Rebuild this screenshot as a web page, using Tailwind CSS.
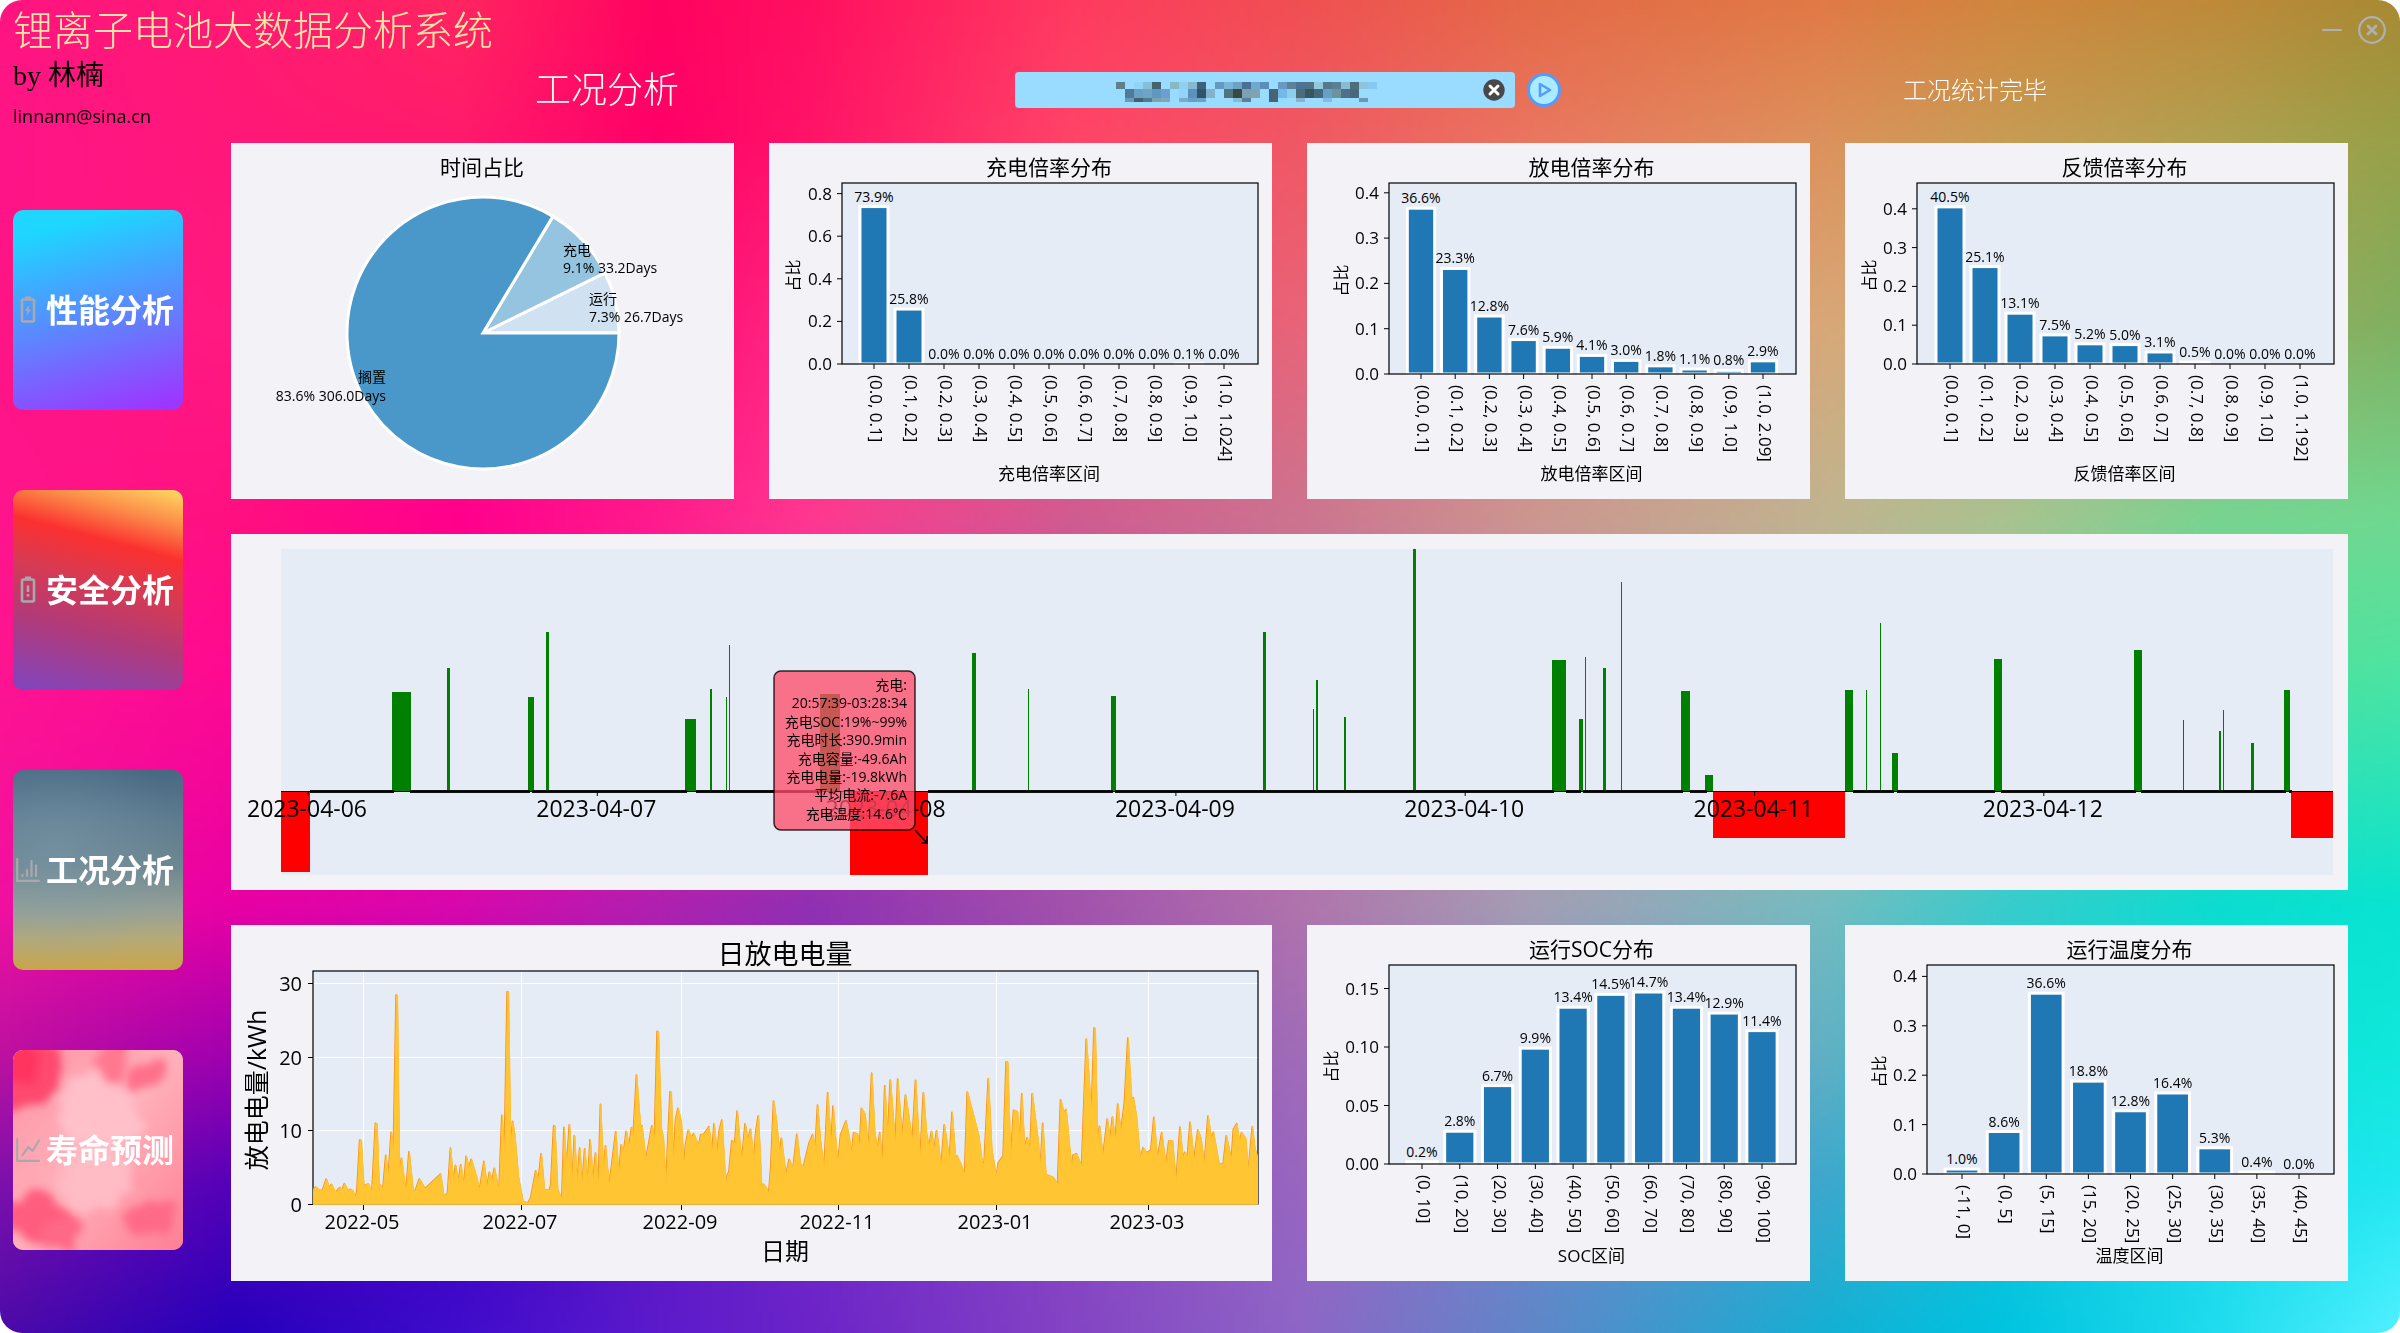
<!DOCTYPE html>
<html lang="zh-CN">
<head>
<meta charset="utf-8">
<meta name="viewport" content="width=device-width, initial-scale=1">
<title>锂离子电池大数据分析系统</title>
<script src="https://cdn.jsdelivr.net/npm/@tailwindcss/browser@4"></script>
</head>
<body class="bg-white font-['Open_Sans','Noto_Sans_CJK_SC',sans-serif] text-black">
<div class="relative isolate min-h-screen overflow-hidden rounded-[22px]">
  <canvas id="backdrop" width="392" height="218" class="absolute inset-0 -z-10 h-full w-full" aria-hidden="true"></canvas>

  <header class="flex h-[143px]">
    <div class="w-[500px] shrink-0 pl-[13px]">
      <h1 class="text-[40px] leading-[60px] font-light whitespace-nowrap text-[#ffe6a6]">锂离子电池大数据分析系统</h1>
      <p class="font-['Liberation_Serif','Noto_Sans_CJK_SC',serif] text-[28px] leading-8">by 林楠</p>
      <a href="mailto:linnann@sina.cn" class="block text-[18px] leading-[48px]">linnann@sina.cn</a>
    </div>
    <div class="min-w-0 flex-1">
      <div class="flex h-[60px] items-center justify-end gap-4 pr-[14px] text-[#b0b0b4]">
        <button type="button" aria-label="最小化">
          <svg class="size-[20px]" viewBox="0 0 20 20" fill="none" stroke="currentColor" stroke-width="2.2" stroke-linecap="round"><path d="M1 10h18"/></svg>
        </button>
        <button type="button" aria-label="关闭">
          <svg class="size-[28px]" viewBox="0 0 28 28" fill="none" stroke="currentColor" stroke-width="2.2" stroke-linecap="round"><circle cx="14" cy="14" r="12.8"/><path d="m10 10 8 8m0-8-8 8" stroke-width="2.8"/></svg>
        </button>
      </div>
      <div class="grid h-[60px] grid-cols-[480fr_888fr_497fr] items-center pl-[35px]">
        <h2 class="text-[36px] leading-[60px] font-light whitespace-nowrap text-[#fffff0]">工况分析</h2>
        <form class="flex items-center gap-[11px]">
          <div class="relative w-[500px]">
            <input type="text" aria-label="数据文件" class="block h-9 w-full rounded bg-[#9adcff]">
            <svg id="mosaic" class="pointer-events-none absolute top-[10px] left-[101px]" width="261" height="20" viewBox="0 0 261 20" shape-rendering="crispEdges" aria-hidden="true"></svg>
            <button type="button" aria-label="清除" class="absolute top-[7px] right-[10px]">
              <svg class="size-[22px]" viewBox="0 0 22 22"><circle cx="11" cy="11" r="10.7" fill="#484848"/><path d="m7 7 8 8m0-8-8 8" stroke="#fff" stroke-width="3" stroke-linecap="round"/></svg>
            </button>
          </div>
          <button type="button" aria-label="运行">
            <svg class="size-[36px]" viewBox="0 0 36 36" stroke="#549bff" stroke-width="3" stroke-linejoin="round"><circle cx="18" cy="18" r="15.5" fill="#a9ecff"/><path d="M14 12v12l10-6z" fill="none" stroke-width="2.6"/></svg>
          </button>
        </form>
        <p class="text-[24px] leading-[60px] font-light whitespace-nowrap text-white">工况统计完毕</p>
      </div>
    </div>
  </header>

  <div class="flex">
    <nav class="flex w-[231px] shrink-0 flex-col gap-20 pt-[67px] pl-[13px]">
      <button type="button" class="flex h-[200px] w-[170px] items-center gap-1.5 rounded-[10px] bg-[linear-gradient(165deg,#1ed6ff_12%,#3faaff_35%,#6878ff_62%,#9b38ff_95%)] pl-[3px] text-[32px] font-bold whitespace-nowrap text-white">
        <svg class="size-[24px] shrink-0 overflow-visible text-[#a9a9ad]" viewBox="0 0 24 24" fill="none" stroke="currentColor" stroke-width="2.6"><rect x="6" y="1.5" width="12" height="22" rx="1.5"/><path d="M9 0h6" stroke-width="3"/><path d="m13 7-4 6h2.5l-1 5 4.500-6.500h-2.500z" fill="currentColor" stroke="none"/></svg>
        <span>性能分析</span>
      </button>
      <button type="button" class="flex h-[200px] w-[170px] items-center gap-1.5 rounded-[10px] bg-[linear-gradient(195deg,#ffdb62_0%,#fb8a48_15%,#fb3030_29%,#d83a52_46%,#b23a78_68%,#8244bc_98%)] pl-[3px] text-[32px] font-bold whitespace-nowrap text-white">
        <svg class="size-[24px] shrink-0 overflow-visible text-[#a9a9ad]" viewBox="0 0 24 24" fill="none" stroke="currentColor" stroke-width="2.6"><rect x="6" y="1.5" width="12" height="22" rx="1.5"/><path d="M9 0h6" stroke-width="3"/><path d="M12 7.5v6.500m0 2v2.500"/></svg>
        <span>安全分析</span>
      </button>
      <button type="button" aria-current="page" class="flex h-[200px] w-[170px] items-center gap-1.5 rounded-[10px] bg-[radial-gradient(ellipse_at_25%_40%,#7d9cae80,transparent_70%),linear-gradient(180deg,#486882_0%,#5e7b90_25%,#6e8690_48%,#96a196_70%,#b5aa78_84%,#c9a548_100%)] pl-[3px] text-[32px] font-bold whitespace-nowrap text-white">
        <svg class="size-[24px] shrink-0 text-[#a9a9ad]" viewBox="0 0 24 24" fill="none" stroke="currentColor" stroke-width="2.2" stroke-linecap="round"><path d="M1.2 1.2v21.600H23M6.500 17v1M11 12v6M15.500 3v15M20 7.500V18"/></svg>
        <span>工况分析</span>
      </button>
      <button type="button" class="relative isolate flex h-[200px] w-[170px] items-center gap-1.5 overflow-hidden rounded-[10px] bg-[#ff9cac] pl-[3px] text-[32px] font-bold whitespace-nowrap text-white">
        <!-- pink clouds: soft blobs with edges roughened by noise -->
        <svg class="absolute inset-0 -z-10 h-full w-full" viewBox="0 0 170 200" preserveAspectRatio="none" aria-hidden="true">
          <defs>
            <linearGradient id="sky" x1="0" y1="0" x2="1" y2="1"><stop offset="0" stop-color="#ff94a6"/><stop offset=".5" stop-color="#ffb0ba"/><stop offset="1" stop-color="#ff7f94"/></linearGradient>
            <filter id="cloud" x="-20%" y="-20%" width="140%" height="140%">
              <feTurbulence type="fractalNoise" baseFrequency=".03" numOctaves="4" seed="4"/>
              <feDisplacementMap in="SourceGraphic" scale="34" xChannelSelector="R" yChannelSelector="G"/>
              <feGaussianBlur stdDeviation="4"/>
            </filter>
          </defs>
          <rect width="170" height="200" fill="url(#sky)"/>
          <g filter="url(#cloud)">
            <ellipse cx="88" cy="60" rx="42" ry="38" fill="#ffc0c9"/>
            <ellipse cx="82" cy="130" rx="36" ry="34" fill="#ffbcc5"/>
            <ellipse cx="14" cy="20" rx="32" ry="42" fill="#ff4a6e"/>
            <ellipse cx="8" cy="10" rx="18" ry="26" fill="#ff3460"/>
            <ellipse cx="98" cy="8" rx="22" ry="26" fill="#ff7890"/>
            <ellipse cx="138" cy="26" rx="18" ry="14" fill="#ff6f8a"/>
            <ellipse cx="24" cy="168" rx="34" ry="18" fill="#ff5d7e"/>
            <ellipse cx="50" cy="184" rx="20" ry="20" fill="#ff6886"/>
            <ellipse cx="136" cy="168" rx="26" ry="14" fill="#ff6a88"/>
          </g>
        </svg>
        <svg class="size-[24px] shrink-0 text-[#a9a9ad]" viewBox="0 0 24 24" fill="none" stroke="currentColor" stroke-width="2.2" stroke-linecap="round" stroke-linejoin="round"><path d="M1.2 1.2v21.600H23M6.500 17l6-8 4 4L23 2.500"/></svg>
        <span>寿命预测</span>
      </button>
    </nav>

    <main class="grid min-w-0 flex-1 grid-cols-4 gap-[35px] pr-[52px] pb-[52px]">
      <section class="bg-[#f3f2f7]">
        <svg id="share" class="block w-full" viewBox="0 0 503 356" role="img" aria-label="时间占比"></svg>
      </section>
      <section class="bg-[#f3f2f7]">
        <svg id="charge" class="block w-full" viewBox="0 0 503 356" role="img" aria-label="充电倍率分布"></svg>
      </section>
      <section class="bg-[#f3f2f7]">
        <svg id="discharge" class="block w-full" viewBox="0 0 503 356" role="img" aria-label="放电倍率分布"></svg>
      </section>
      <section class="bg-[#f3f2f7]">
        <svg id="feedback" class="block w-full" viewBox="0 0 503 356" role="img" aria-label="反馈倍率分布"></svg>
      </section>
      <section class="col-span-4 bg-[#f3f2f7]">
        <svg id="timeline" class="block w-full" viewBox="0 0 2117 356" role="img" aria-label="工况时间轴"></svg>
      </section>
      <section class="col-span-2 bg-[#f3f2f7]">
        <svg id="daily" class="block w-full" viewBox="0 0 1041 356" role="img" aria-label="日放电电量"></svg>
      </section>
      <section class="bg-[#f3f2f7]">
        <svg id="soc" class="block w-full" viewBox="0 0 503 356" role="img" aria-label="运行SOC分布"></svg>
      </section>
      <section class="bg-[#f3f2f7]">
        <svg id="temperature" class="block w-full" viewBox="0 0 503 356" role="img" aria-label="运行温度分布"></svg>
      </section>
    </main>
  </div>
</div>

<script>
const byId = id => document.getElementById(id);
const text = (x, y, s, size, anchor = 'middle') =>
  `<text x="${x}" y="${y}" font-size="${size}" text-anchor="${anchor}">${s}</text>`;
const rect = (x, y, w, h, fill, extra = '') =>
  `<rect x="${x}" y="${y}" width="${w}" height="${h}" fill="${fill}" ${extra}/>`;
const line = (x1, y1, x2, y2, w = 1, c = '#000') =>
  `<path d="M${x1} ${y1}L${x2} ${y2}" stroke="${c}" stroke-width="${w}" fill="none"/>`;

// Mesh-gradient backdrop: colours at grid nodes, interpolated between them
(() => {
  const W = 1568, H = 871;
  const xs = [0, 151, 300, 430, 530, 700, 850, 1000, 1195, 1310, 1450, 1568];
  const ys = [0, 90, 210, 337, 430, 592, 690, 775, 871];
  const rows = [
    'ff1480 ff1a72 ff2560 ff0360 ff1060 ff3a60 f05052 e46a48 e07a46 d0863e be8a3a a88a34',
    'ff1488 ff1878 ff1a6c ff0068 ff1468 ff4468 f05864 ea7660 dc925c c89c54 b0a050 98a048',
    'ff1486 ff1a80 ff1a80 ff0a78 ff2a80 f05078 e86478 e08078 d8a878 c8ac70 a0ac60 80b060',
    'ff148c ff1080 ff008c ff1c8c ff3890 d05c90 cc7490 cc9690 c0b490 aac290 78d490 70d890',
    'ff1490 ff0a90 ff0090 f01898 e030a0 c050a0 c070a0 c090a0 b0b4a0 90c8a0 58dc98 50e4a0',
    'f010a0 e800a4 d808ac b020b0 9030b2 a252ac b074ac a49eb4 74bcc0 38cccc 0cdcd0 08e4d0',
    'be10a0 a000b0 9000b0 9020b0 8030b4 9050b4 a06cb8 8090c0 60b0c4 30c8d0 10e0d8 10e8dc',
    '7c10ac 5400b8 4000c0 6018c0 7028c8 8848c0 9866c0 7088c8 3ca8cc 18c0d8 18dce8 20e8f0',
    '4c0aa8 2600bc 400ccc 5c1acc 6c24c8 8444c4 8e66c6 6086c8 14b0d4 00c4e0 20dcee 50f0ff'
  ].map(r => r.split(' ').map(h => [0, 2, 4].map(i => parseInt(h.substr(i, 2), 16))));
  const cell = (arr, v) => {
    let i = 0;
    while (i < arr.length - 2 && v > arr[i + 1]) i++;
    return [i, (v - arr[i]) / (arr[i + 1] - arr[i])];
  };
  const cv = byId('backdrop'), ctx = cv.getContext('2d');
  const img = ctx.createImageData(cv.width, cv.height);
  for (let y = 0; y < cv.height; y++) {
    const [j, v] = cell(ys, y / (cv.height - 1) * H);
    for (let x = 0; x < cv.width; x++) {
      const [i, u] = cell(xs, x / (cv.width - 1) * W);
      const o = (y * cv.width + x) * 4;
      for (let k = 0; k < 3; k++) {
        const a = rows[j][i][k] * (1 - u) + rows[j][i + 1][k] * u;
        const b = rows[j + 1][i][k] * (1 - u) + rows[j + 1][i + 1][k] * u;
        img.data[o + k] = a * (1 - v) + b * v;
      }
      img.data[o + 3] = 255;
    }
  }
  ctx.putImageData(img, 0, 0);
})();

// Masked file name: three rows of 9px-wide blocks, "-" leaves a gap
byId('mosaic').innerHTML = [
  [0, 7, '5f7f8c - 92d4f5 86bfd8 45626f - 86b8c6 90cfee 86b8d0 3d6178 - 6499c0 7ab4d8 6aa4c0 4a6f95 6fa8d0 5d8cba - 6899c4 5a8298 4c7494 4f7688 92c8dc 56788a 5b7f94 88bcd0 4f6e7c 8cc4dc 88c8f4'],
  [7, 9, '- 4f7a98 6aa0c8 6fa4c4 5f98c0 6c9ed0 - 92d4fa 5a92ba 2f536a 84b0c8 - 4f7480 3a4844 7ca0b4 7fa4b0 - 456478 74b8e8 8ccfea 4c6c7c 38565f 44687c 65a0c8 6c949c 4c7088 48687c'],
  [16, 4, '- 6a98bc 44606e 507a90 7ca4b0 7ca8b8 - 7aacc8 66a0c8 6aa4cc - - - 84bcd4 5a8094 - - 456478 92dcff - 84b4d0 - - 84bce0 - - - 6d98b0']
].map(([y, h, row]) => row.split(' ').map((c, i) => c === '-' ? '' : rect(i * 9, y, 9, h, '#' + c)).join('')).join('');

// Pie: share of time, counter-clockwise from east
(() => {
  const cx = 252, cy = 190, r = 136;
  const pt = f => [cx + r * Math.cos(f * 2 * Math.PI), cy - r * Math.sin(f * 2 * Math.PI)];
  const wedge = (a, b, c) => {
    const [x1, y1] = pt(a), [x2, y2] = pt(b);
    return `<path d="M${cx} ${cy}L${x1} ${y1}A${r} ${r} 0 ${b - a > .5 ? 1 : 0} 0 ${x2} ${y2}Z" fill="${c}" stroke="#fff" stroke-width="3"/>`;
  };
  byId('share').innerHTML =
    text(251, 32, '时间占比', 21) +
    wedge(0, .073, '#d0e1f2') + wedge(.073, .164, '#94c4df') + wedge(.164, 1, '#4a98c9') +
    text(332, 112, '充电', 14, 'start') + text(332, 130, '9.1% 33.2Days', 14, 'start') +
    text(358, 161, '运行', 14, 'start') + text(358, 179, '7.3% 26.7Days', 14, 'start') +
    text(155, 239, '搁置', 14, 'end') + text(155, 258, '83.6% 306.0Days', 14, 'end');
})();

// Histogram panels
function histogram(id, o) {
  const step = (o.last - o.first) / (o.values.length - 1), right = 489, top = 40;
  let s = rect(o.left, top, right - o.left, o.bottom - top, '#e5ecf6');
  s += o.values.map((v, i) => {
    const x = o.first + i * step, h = v / 100 * o.unit, w = step * .8;
    return rect(x - w / 2, o.bottom - h, w, h, '#1f77b4', v ? 'stroke="#fff" stroke-width="3"' : '') +
      line(x, o.bottom, x, o.bottom + 5) +
      text(x, o.bottom - h - 5, v.toFixed(1) + '%', 14) +
      `<text transform="translate(${x - 4} ${o.bottom + 11}) rotate(90)" font-size="17">${o.bins[i]}</text>`;
  }).join('');
  s += o.ticks.map(t => {
    const y = o.bottom - t * o.unit;
    return line(o.left - 5, y, o.left, y) + text(o.left - 10, y + 6, t.toFixed(o.digits || 1), 17, 'end');
  }).join('');
  s += `<rect x="${o.left}" y="${top}" width="${right - o.left}" height="${o.bottom - top}" fill="none" stroke="#000" stroke-width="1.2"/>`;
  const mid = (o.left + right) / 2 - 1;
  s += text(mid, 32, o.title, 21) + text(mid, 337, o.xlabel, 17);
  s += `<text transform="translate(${o.ylabelX + 6} ${(top + o.bottom) / 2 + 2}) rotate(-90)" font-size="16" text-anchor="middle">占比</text>`;
  byId(id).innerHTML = s;
}
const rateBins = last => ['(0.0, 0.1]', '(0.1, 0.2]', '(0.2, 0.3]', '(0.3, 0.4]', '(0.4, 0.5]', '(0.5, 0.6]', '(0.6, 0.7]', '(0.7, 0.8]', '(0.8, 0.9]', '(0.9, 1.0]', last];
histogram('charge', { title: '充电倍率分布', xlabel: '充电倍率区间', left: 73, bottom: 221, unit: 213, first: 105, last: 455, ylabelX: 24,
  ticks: [0, .2, .4, .6, .8], values: [73.9, 25.8, 0, 0, 0, 0, 0, 0, 0, .1, 0], bins: rateBins('(1.0, 1.024]') });
histogram('discharge', { title: '放电倍率分布', xlabel: '放电倍率区间', left: 82, bottom: 231, unit: 453, first: 114, last: 456, ylabelX: 34,
  ticks: [0, .1, .2, .3, .4], values: [36.6, 23.3, 12.8, 7.6, 5.9, 4.1, 3.0, 1.8, 1.1, .8, 2.9], bins: rateBins('(1.0, 2.09]') });
histogram('feedback', { title: '反馈倍率分布', xlabel: '反馈倍率区间', left: 72, bottom: 221, unit: 388, first: 105, last: 455, ylabelX: 24,
  ticks: [0, .1, .2, .3, .4], values: [40.5, 25.1, 13.1, 7.5, 5.2, 5.0, 3.1, .5, 0, 0, 0], bins: rateBins('(1.0, 1.192]') });
histogram('soc', { title: '运行SOC分布', xlabel: 'SOC区间', left: 82, bottom: 239, unit: 1170, first: 115, last: 455, ylabelX: 24, digits: 2,
  ticks: [0, .05, .1, .15], values: [.2, 2.8, 6.7, 9.9, 13.4, 14.5, 14.7, 13.4, 12.9, 11.4],
  bins: ['(0, 10]', '(10, 20]', '(20, 30]', '(30, 40]', '(40, 50]', '(50, 60]', '(60, 70]', '(70, 80]', '(80, 90]', '(90, 100]'] });
histogram('temperature', { title: '运行温度分布', xlabel: '温度区间', left: 82, bottom: 249, unit: 494, first: 117, last: 454, ylabelX: 34,
  ticks: [0, .1, .2, .3, .4], values: [1.0, 8.6, 36.6, 18.8, 12.8, 16.4, 5.3, .4, 0],
  bins: ['(-11, 0]', '(0, 5]', '(5, 15]', '(15, 20]', '(20, 25]', '(25, 30]', '(30, 35]', '(35, 40]', '(40, 45]'] });

// Timeline: green = driving (x, width, top), red = charging (x, width, bottom)
(() => {
  const axis = 257;
  const runs = [[161, 19, 158], [216, 3, 134], [297, 6, 163], [315, 3, 98], [454, 11, 185], [479, 2, 155], [495, 1, 163], [498, 1, 111],
    [589, 20, 160], [741, 4, 119], [797, 1, 155], [880, 5, 162], [1032, 3, 98], [1082, 1, 175], [1085, 2, 146], [1113, 2, 183],
    [1182, 3, 15], [1321, 14, 126], [1348, 4, 185], [1354, 1, 123], [1372, 3, 134], [1390, 1, 48], [1450, 9, 157], [1474, 8, 241],
    [1614, 8, 156], [1635, 1, 156], [1649, 1, 89], [1661, 6, 219], [1763, 8, 125], [1903, 8, 116], [1952, 1, 186], [1988, 2, 197],
    [1992, 1, 176], [2020, 3, 209], [2053, 6, 156]];
  const charges = [[50, 29, 338], [619, 78, 341], [1482, 132, 304], [2060, 42, 304]];
  let s = rect(50, 15, 2052, 326, '#e5ecf6');
  s += charges.map(([x, w, b]) => rect(x, axis, w, b - axis, '#f00')).join('');
  s += runs.map(([x, w, t]) => rect(x, t, w, axis - t, '#008000')).join('');
  const idle = [[79, 163], [179, 299], [301, 456], [465, 591], [697, 882], [884, 1323], [1335, 1350], [1352, 1452], [1459, 1476], [1622, 1663], [1666, 1764], [1770, 1905], [1910, 2055], [2058, 2061]];
  s += idle.map(([a, b]) => rect(a, 256, b - a, 3, '#111')).join('') + rect(50, 257, 2052, 1, '#000');
  ['06', '07', '08', '09', '10', '11', '12'].forEach((d, i) => {
    const x = 77 + i * 289.3;
    s += line(x, 257, x, 262) + text(x - 1, 283, '2023-04-' + d, 23);
  });
  s += `<rect x="543" y="137" width="141" height="159" rx="7" fill="#ff4d6a" fill-opacity=".78" stroke="#000" stroke-opacity=".8" stroke-width="1.5"/>`;
  s += ['充电:', '20:57:39-03:28:34', '充电SOC:19%~99%', '充电时长:390.9min', '充电容量:-49.6Ah', '充电电量:-19.8kWh', '平均电流:-7.6A', '充电温度:14.6℃']
    .map((t, i) => text(676, 156 + Math.round(i * 18.4), t, 14, 'end')).join('');
  s += '<path d="M684 296L696 309M696 302v7h-6" fill="none" stroke="#000" stroke-width="1.5"/>';
  byId('timeline').innerHTML = s;
})();

// Daily discharged energy: area trace in two sampled halves, each with its own scale
(() => {
  const halves = [
    [2.8, -11, '261,838 268,831 277,840 287,841 297,807 306,833 312,823 323,848 334,833 342,838 348,821 358,843 364,838 371,842 379,860 383,845 391,690 395,692 402,827 415,822 425,847 435,640 439,642 445,822 456,835 464,736 471,800 479,667 485,735 493,255 496,257 502,780 508,745 520,850 529,725 540,840 545,847 558,807 574,836 617,792 626,858 637,850 645,714 653,815 659,766 667,815 674,764 682,830 689,739 697,775 703,748 719,805 726,842 739,754 747,832 754,787 761,812 768,775 781,845 789,616 796,730 804,245 807,247 813,712 819,634 825,675 835,800 848,876 863,878 870,862 884,782 891,810 899,731 908,840 922,840 926,825 934,647 937,648 945,840 957,867 963,652 970,775 978,644 986,815 992,677 1000,820 1007,714 1014,825 1021,716 1029,822 1036,689 1044,815 1051,729 1059,830 1065,583 1073,790 1079,707 1089,830 1108,665 1116,800 1123,704 1130,725 1137,664 1145,708 1152,653 1157,672 1166,495 1177,655 1181,647 1192,750 1209,647 1216,692 1224,364 1227,366 1235,655 1241,685 1248,830 1260,545 1263,547 1269,770 1275,630 1282,595 1291,635 1299,770 1303,705 1311,661 1320,683 1326,671 1340,708 1346,674 1355,672 1369,650 1377,735 1383,641 1392,735 1397,665 1405,630 1415,820 1420,797 1425,785 1433,692 1441,700 1448,603 1460,760 1470,641 1478,690 1485,658 1494,755 1500,665 1507,617 1516,825 1522,823 1530,835 1536,853 1542,770'],
    [2.958, 529, '40,573 49,640 57,735 63,685 76,797 86,748 97,777 109,673 119,762 128,770 145,700 155,674 163,715 170,585 178,690 189,780 200,548 210,705 216,588 229,765 238,675 254,633 264,685 270,735 277,668 288,672 294,715 300,595 310,612 321,715 330,489 339,670 347,718 354,668 362,765 369,527 377,690 385,510 400,705 407,507 420,685 430,555 440,620 450,695 460,511 473,752 483,548 492,670 500,710 507,664 515,718 522,662 535,770 545,644 560,750 568,607 578,745 583,738 595,765 605,795 613,546 630,612 646,675 655,745 662,773 675,506 685,720 699,800 704,760 719,738 728,455 732,457 741,752 750,601 761,605 768,705 774,551 782,715 790,683 798,725 805,551 822,690 829,775 836,640 845,793 868,803 880,825 889,569 898,608 905,599 921,775 926,736 936,731 951,770 965,387 980,612 988,354 991,356 998,690 1004,649 1014,740 1027,627 1035,690 1042,621 1050,695 1058,582 1067,668 1078,575 1088,384 1099,570 1104,563 1113,620 1124,747 1133,713 1144,729 1156,720 1165,622 1175,750 1188,668 1200,768 1209,693 1220,693 1230,820 1242,651 1250,745 1256,727 1264,740 1272,636 1283,752 1295,660 1304,685 1314,765 1325,618 1335,690 1341,667 1358,765 1370,760 1379,677 1394,750 1400,658 1410,641 1418,700 1424,668 1436,685 1444,785 1456,650 1463,715 1472,745']
  ];
  const points = halves.flatMap(([k, x0, pts]) => pts.split(' ').map(p => {
    const [x, y] = p.split(',').map(Number);
    return [x / k + x0, y / 3 - 15];
  }));
  const path = dx => points.map(([x, y]) => (x + dx).toFixed(1) + ' ' + y.toFixed(1)).join('L');
  const months = [[132, '2022-05'], [290, '2022-07'], [450, '2022-09'], [607, '2022-11'], [765, '2023-01'], [917, '2023-03']];
  const levels = [[279, 0], [205, 10], [132, 20], [58, 30]];
  let s = '<clipPath id="plot"><rect x="82" y="46" width="945" height="234"/></clipPath>' + rect(82, 46, 945, 233, '#e5ecf6');
  s += months.map(([x]) => line(x + .5, 46, x + .5, 279, 1, '#fff')).join('');
  s += levels.map(([y]) => line(82, y + .5, 1027, y + .5, 1, '#fff')).join('');
  s += '<rect x="82" y="46" width="945" height="233" fill="none" stroke="#000" stroke-width="1.2"/>';
  // orange trace under the area, so that it shows on the rising edges
  s += `<g clip-path="url(#plot)" fill="none" stroke-linejoin="round"><path d="M${path(0)}" stroke="#ff8c1a" stroke-width="1.6"/><path d="M82 279.5L${path(0.5)}L1027 279.5Z" fill="#ffc533" stroke="#ffc533" stroke-width="1"/></g>`;
  s += line(82, 279.5, 1027, 279.5, 1, '#e8b040');
  s += months.map(([x, m]) => line(x + .5, 280, x + .5, 285) + text(x - 1, 304, m, 20)).join('');
  s += levels.map(([y, v]) => line(77, y + .5, 82, y + .5) + text(71, y + 8, v, 20, 'end')).join('');
  s += text(554, 39, '日放电电量', 27) + text(554, 335, '日期', 24);
  s += '<text transform="translate(35 165) rotate(-90)" font-size="25" text-anchor="middle">放电电量/kWh</text>';
  byId('daily').innerHTML = s;
})();
</script>
</body>
</html>
